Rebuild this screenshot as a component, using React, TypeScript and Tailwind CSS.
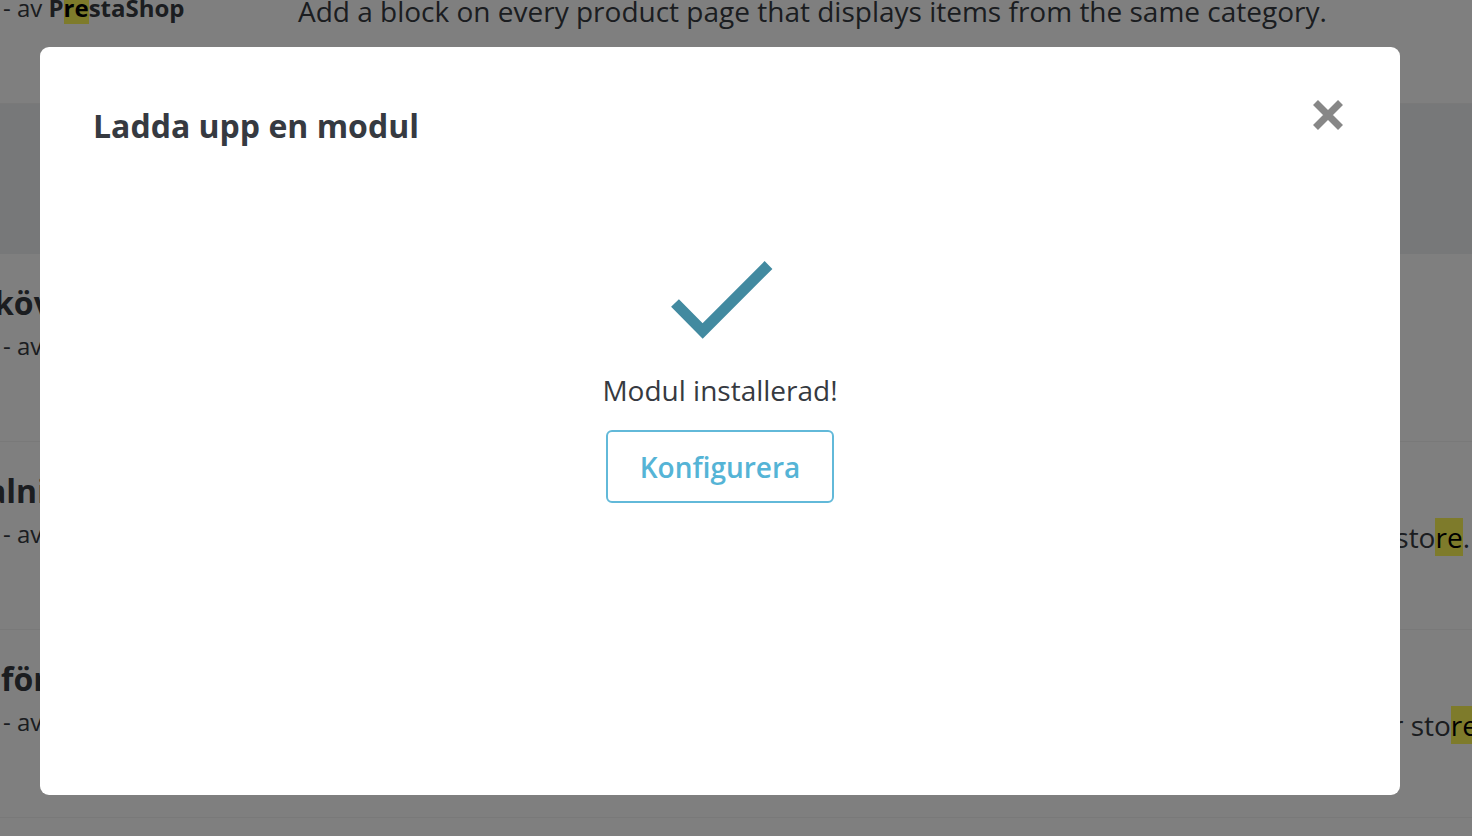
import React from "react";

function Mark({ children }: { children: React.ReactNode }) {
  return <mark className="bg-[#fcf757] text-black">{children}</mark>;
}

function Author() {
  return (
    <div className="mt-[7px] h-[32px] whitespace-nowrap text-[24px] leading-[32px]">
      - av{" "}
      <span className="font-bold">
        P<Mark>re</Mark>staShop
      </span>
    </div>
  );
}

export default function App() {
  return (
    <div className="relative h-[836px] w-[1472px] overflow-hidden bg-white font-['Open_Sans',sans-serif] text-[#363a41]">
      {/* page behind the modal */}
      <div className="-mt-[84px] flex flex-col">
        {/* row 0 (scrolled) */}
        <div className="flex h-[188px] shrink-0 border-b border-[#f2f2f2]">
          <div className="flex w-[298px] shrink-0 flex-col pl-[3px] pt-[29px]">
            <div className="h-[40px] whitespace-nowrap text-[32px] font-bold leading-[40px]">
              Relaterade produkter
            </div>
            <Author />
          </div>
          <div className="min-w-0 flex-1 whitespace-nowrap pt-[76px] text-[28px] leading-[38px]">
            Add a block on every product page that displays items from the same category.
          </div>
        </div>

        {/* category band */}
        <div className="h-[150px] shrink-0 bg-[#eff1f2]" />

        {/* row 1 */}
        <div className="flex h-[188px] shrink-0 border-b border-[#f2f2f2]">
          <div className="flex w-[298px] shrink-0 flex-col pl-[3px] pt-[29px]">
            <div className="-ml-[9px] h-[40px] whitespace-nowrap text-[32px] font-bold leading-[40px]">
              köversikt
            </div>
            <Author />
          </div>
          <div className="min-w-0 flex-1 whitespace-nowrap pt-[76px] text-[28px] leading-[38px]">
            Shows a summary of the shopping cart.
          </div>
        </div>

        {/* row 2 */}
        <div className="flex h-[188px] shrink-0 border-b border-[#f2f2f2]">
          <div className="flex w-[298px] shrink-0 flex-col pl-[3px] pt-[29px]">
            <div className="-ml-[16px] h-[40px] whitespace-nowrap text-[32px] font-bold leading-[40px]">
              alningsalternativ
            </div>
            <Author />
          </div>
          <div className="min-w-0 flex-1 whitespace-nowrap pr-[2px] pt-[76px] text-right text-[28px] leading-[38px]">
            <span>
              Adds the payment options available in your sto<Mark>re</Mark>.
            </span>
          </div>
        </div>

        {/* row 3 */}
        <div className="flex h-[188px] shrink-0 border-b border-[#f2f2f2]">
          <div className="flex w-[298px] shrink-0 flex-col pl-[3px] pt-[29px]">
            <div className="-ml-[2px] h-[40px] whitespace-nowrap text-[32px] font-bold leading-[40px]">
              förval
            </div>
            <Author />
          </div>
          <div className="-mr-[6px] min-w-0 flex-1 whitespace-nowrap pt-[76px] text-right text-[28px] leading-[38px]">
            <span>
              Display a selection of products for your sto<Mark>re</Mark>
            </span>
          </div>
        </div>

        <div className="h-[188px] shrink-0" />
      </div>

      {/* overlay + modal */}
      <div className="absolute inset-0 bg-black/50 pl-[40px] pt-[47px]">
        <div className="flex h-[748px] w-[1360px] flex-col rounded-[9px] bg-white">
          <div className="flex h-[96px] items-start justify-between pl-[54px] pr-[57px] pt-[53px]">
            <h2 className="-ml-[1px] mt-[7px] text-[32px] font-bold leading-[38px] text-[#363a41]">
              Ladda upp en modul
            </h2>
            <button type="button" aria-label="Stäng" className="h-[30px] w-[30px]">
              <svg width="30" height="30" viewBox="0 0 30 30" className="block">
                <path
                  d="M2.5 2.5 L27.5 27.5 M27.5 2.5 L2.5 27.5"
                  stroke="#878787"
                  strokeWidth="7"
                  strokeLinecap="butt"
                  fill="none"
                />
              </svg>
            </button>
          </div>

          <div className="flex flex-col items-center pt-[115px]">
            <svg width="110" height="84" viewBox="0 0 110 84" className="block">
              <polyline
                points="10,45 37.7,73 103.5,7"
                fill="none"
                stroke="#428aa0"
                strokeWidth="11"
                strokeLinecap="butt"
                strokeLinejoin="miter"
              />
            </svg>
            <p className="mt-[29px] text-[28px] leading-[38px] text-[#363a41]">
              Modul installerad!
            </p>
            <button
              type="button"
              className="mt-[21px] flex h-[73px] w-[228px] items-center justify-center rounded-[6px] border-2 border-[#62b9d9] text-[28px] font-semibold leading-[38px] text-[#55b4d6]"
            >
              Konfigurera
            </button>
          </div>
        </div>
      </div>
    </div>
  );
}
